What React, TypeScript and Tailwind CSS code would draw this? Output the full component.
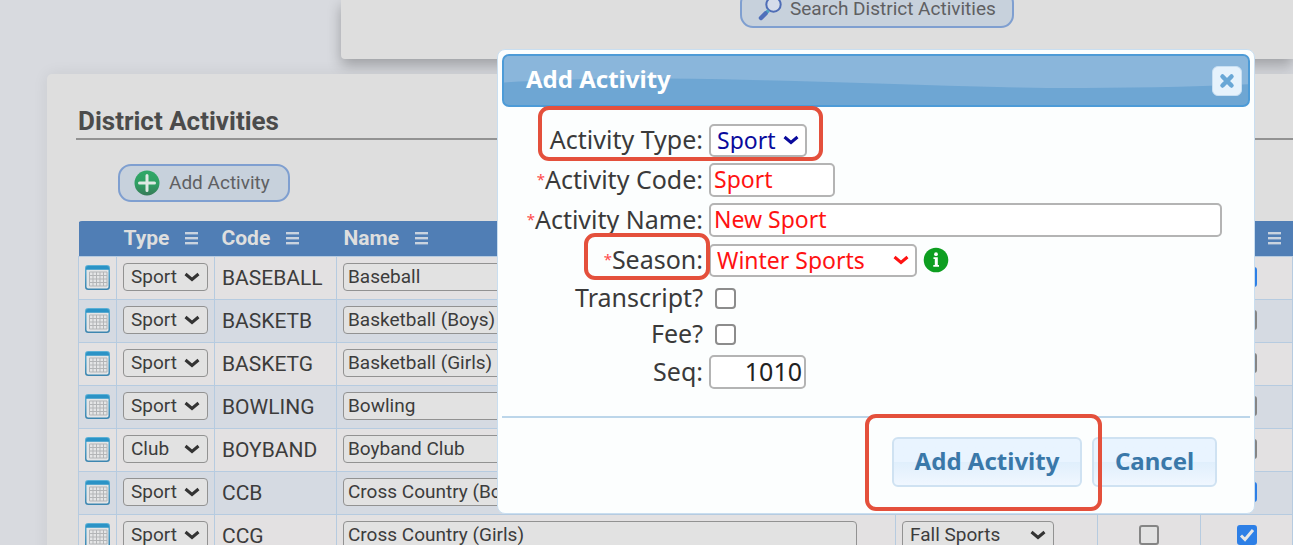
import React, { useId } from "react";

type Activity = {
  type: string;
  code: string;
  name: string;
  season: string;
  active: boolean;
};

const activities: Activity[] = [
  { type: "Sport", code: "BASEBALL", name: "Baseball", season: "Spring Sports", active: true },
  { type: "Sport", code: "BASKETB", name: "Basketball (Boys)", season: "Winter Sports", active: false },
  { type: "Sport", code: "BASKETG", name: "Basketball (Girls)", season: "Winter Sports", active: false },
  { type: "Sport", code: "BOWLING", name: "Bowling", season: "Winter Sports", active: false },
  { type: "Club", code: "BOYBAND", name: "Boyband Club", season: "Fall Sports", active: false },
  { type: "Sport", code: "CCB", name: "Cross Country (Boys)", season: "Fall Sports", active: true },
  { type: "Sport", code: "CCG", name: "Cross Country (Girls)", season: "Fall Sports", active: true },
];

function Chevron({ className }: { className: string }) {
  return (
    <svg viewBox="0 0 16 10" className={className} fill="none" stroke="currentColor" strokeWidth="3" aria-hidden="true">
      <path d="M1.5 2 L8 7.5 L14.5 2" />
    </svg>
  );
}

function MenuIcon() {
  return (
    <svg viewBox="0 0 13 13" className="h-[13px] w-[13px] shrink-0" fill="#c9d3df" aria-hidden="true">
      <rect x="0" y="0" width="13" height="2.4" />
      <rect x="0" y="5" width="13" height="2.4" />
      <rect x="0" y="10" width="13" height="2.4" />
    </svg>
  );
}

function CalendarIcon() {
  return (
    <svg viewBox="0 0 25 25" className="h-[25px] w-[25px]" aria-hidden="true">
      <defs>
        <linearGradient id="calFrame" x1="0" y1="0" x2="0" y2="1">
          <stop offset="0" stopColor="#5bb0d6" />
          <stop offset="1" stopColor="#3d86b0" />
        </linearGradient>
      </defs>
      <rect x="0.75" y="0.75" width="23.5" height="23.5" rx="2.5" fill="#e4e5e6" stroke="url(#calFrame)" strokeWidth="1.5" />
      <path d="M1 4.8 V3 Q1 1 3 1 H22 Q24 1 24 3 V4.8 Z" fill="#2b93c6" />
      <path d="M4.5 7 H22 V21 H4.5 Z M4.5 10.5 H22 M4.5 14 H22 M4.5 17.5 H22 M8 7 V21 M11.5 7 V21 M15 7 V21 M18.5 7 V21" fill="none" stroke="#b3b5b7" strokeWidth="1" />
    </svg>
  );
}

function PlusIcon() {
  return (
    <svg viewBox="0 0 26 26" className="h-[26px] w-[26px]" aria-hidden="true">
      <defs>
        <linearGradient id="plusFill" x1="0" y1="0" x2="0" y2="1">
          <stop offset="0" stopColor="#30a868" />
          <stop offset="0.55" stopColor="#2f9e63" />
          <stop offset="1" stopColor="#377a58" />
        </linearGradient>
      </defs>
      <circle cx="13" cy="13" r="12.5" fill="url(#plusFill)" />
      <path d="M13 5.5 V20.5 M5.5 13 H20.5" stroke="#dfe9e4" strokeWidth="3" strokeLinecap="round" />
    </svg>
  );
}

function SearchIcon() {
  return (
    <svg viewBox="0 0 26 26" className="h-[26px] w-[26px]" aria-hidden="true">
      <circle cx="16.5" cy="8.5" r="7.2" fill="#d5dcea" stroke="#4f6db6" strokeWidth="2" />
      <path d="M11.5 14.5 L9 17" stroke="#4fa6c4" strokeWidth="3.5" />
      <path d="M8.5 17.5 L4 22" stroke="#4f70ba" strokeWidth="4.5" strokeLinecap="round" />
    </svg>
  );
}

function InfoIcon() {
  return (
    <svg viewBox="0 0 26 26" className="h-[26px] w-[26px]" aria-hidden="true">
      <circle cx="13" cy="13" r="12.3" fill="#0d9e20" />
      <circle cx="13" cy="7.2" r="1.9" fill="#fff" />
      <path d="M10.5 10.3 H14.8 V18 H16 V19.8 H10.3 V18 H11.8 V12 H10.5 Z" fill="#fff" />
    </svg>
  );
}

function TableSelect({ value, label }: { value: string; label: string }) {
  return (
    <span className="relative flex">
      <select aria-label={label} defaultValue={value} className="h-7 w-full appearance-none rounded-[4px] border border-[#929292] bg-[#e2e2e2] pb-px pl-[7px] text-[19px] leading-6 text-[#3c3c3c]">
        <option>{value}</option>
      </select>
      <Chevron className="pointer-events-none absolute right-2 top-[9px] h-[10px] w-4 text-[#333]" />
    </span>
  );
}

function TableCheckbox({ checked, label }: { checked: boolean; label: string }) {
  return (
    <span className="relative mx-auto flex h-5 w-5">
      <input
        type="checkbox"
        aria-label={label}
        defaultChecked={checked}
        className="peer h-5 w-5 appearance-none rounded-[3px] border-2 border-[#858585] bg-[#e2e2e2] checked:border-[#2d7fe6] checked:bg-[#2d7fe6]"
      />
      <svg viewBox="0 0 20 20" className="pointer-events-none absolute inset-0 hidden peer-checked:block" fill="none" stroke="#e6e6e6" strokeWidth="3" aria-hidden="true">
        <path d="M4 10.5 L8 14.5 L16 5" />
      </svg>
    </span>
  );
}

function ActivityTable() {
  const cell = "border border-[#b6cbe0] px-[6px] pb-px pt-0";
  return (
    <div className="overflow-hidden rounded-tl-[4px]">
      <table className="w-full table-fixed border-collapse">
        <colgroup>
          <col className="w-[38px]" />
          <col className="w-[98px]" />
          <col className="w-[122px]" />
          <col />
          <col className="w-[202px]" />
          <col className="w-[103px]" />
          <col className="w-[92px]" />
        </colgroup>
        <thead>
          <tr className="h-[35px] bg-[#507eb5] text-left text-[21px] font-bold leading-6 text-[#dedede]">
            <th />
            {["Type", "Code", "Name"].map((title) => (
              <th key={title} className="px-[7px] py-0">
                <span className="flex items-center gap-4">
                  {title}
                  <MenuIcon />
                </span>
              </th>
            ))}
            <th />
            <th />
            <th>
              <span className="flex justify-end pr-3">
                <MenuIcon />
              </span>
            </th>
          </tr>
        </thead>
        <tbody>
          {activities.map((a) => (
            <tr key={a.code} className="h-[43px] odd:bg-[#e3e1e2] even:bg-[#d5dae2]">
              <td className={cell}>
                <button type="button" aria-label={`Schedule ${a.code}`} className="block">
                  <CalendarIcon />
                </button>
              </td>
              <td className={cell}>
                <TableSelect value={a.type} label={`Type of ${a.code}`} />
              </td>
              <td className="border border-[#b6cbe0] px-[7px] py-0 text-[21px] leading-6 text-[#3c3c3c]">{a.code}</td>
              <td className={cell}>
                <input
                  aria-label={`Name of ${a.code}`}
                  defaultValue={a.name}
                  className="block h-7 w-[calc(100%-32px)] rounded-[4px] border border-[#929292] bg-[#e2e2e2] px-1 pb-px text-[19px] leading-6 text-[#3c3c3c]"
                />
              </td>
              <td className={cell}>
                <div className="w-[152px]">
                  <TableSelect value={a.season} label={`Season of ${a.code}`} />
                </div>
              </td>
              <td className={cell}>
                <TableCheckbox checked={false} label={`Fee for ${a.code}`} />
              </td>
              <td className={cell}>
                <TableCheckbox checked={a.active} label={`Active ${a.code}`} />
              </td>
            </tr>
          ))}
        </tbody>
      </table>
    </div>
  );
}

function Field({ id, label, required, compact, children }: { id: string; label: string; required?: boolean; compact?: boolean; children: React.ReactNode }) {
  return (
    <div className={compact ? "flex h-9 items-center gap-[6px]" : "flex h-10 items-center gap-[6px]"}>
      <label htmlFor={id} className="flex w-[201px] shrink-0 items-center justify-end whitespace-nowrap pb-[3px] text-[25px] leading-8 text-[#3a3a3a]">
        {required && <span className="text-[15px] text-[#ff4b4b]">*</span>}
        {label}
      </label>
      {children}
    </div>
  );
}

function AddActivityDialog() {
  const id = useId();
  const box = "rounded-[5px] border-2 border-[#b4b4b4] bg-white pb-[2px]";
  const footerButton =
    "h-[50px] rounded-[6px] border-2 border-[#cfe2f2] bg-linear-to-b from-[#e9f4ff] from-50% via-[#e0effc] via-50% to-[#f0f7ff] pb-[3px] text-[24px] font-bold leading-8 text-[#3a78a9]";
  return (
    <div role="dialog" aria-labelledby={`${id}-title`} className="fixed right-[38px] top-[49px] w-[758px] rounded-[8px] border border-[#c9def0] bg-[#fcfefe] p-1 font-['Noto_Sans',sans-serif]">
      <header className="relative flex h-[53px] items-center justify-between overflow-hidden rounded-[7px] border-2 border-[#4d9bd7] bg-[#6ea6d3] pl-[22px] pr-[6px]">
        <svg viewBox="0 0 748 52" preserveAspectRatio="none" className="absolute inset-0 h-full w-full" aria-hidden="true">
          <path d="M0 0 H748 V30 C690 33 620 34 560 34 C440 33 300 24 128 24 C80 24 40 26 0 28 Z" fill="#8ab6db" />
        </svg>
        <h2 id={`${id}-title`} className="relative pb-[3px] text-[24px] font-bold leading-8 text-white">Add Activity</h2>
        <button type="button" aria-label="Close" className="relative flex h-[30px] w-[30px] items-center justify-center rounded-[6px] border border-[#c8dff2] bg-[#e6f2fc]">
          <svg viewBox="0 0 16 16" className="h-4 w-4" stroke="#69a7d6" strokeWidth="4.5" strokeLinecap="round" aria-hidden="true">
            <path d="M3.5 3.5 L12.5 12.5 M12.5 3.5 L3.5 12.5" />
          </svg>
        </button>
      </header>

      <form onSubmit={(e) => e.preventDefault()}>
        <div className="pb-6 pr-[28px] pt-[13px]">
          <Field id={`${id}-type`} label="Activity Type:">
            <span className="relative flex w-[98px]">
              <select id={`${id}-type`} defaultValue="Sport" className={`${box} h-[33px] w-full appearance-none pl-[6px] text-[23px] leading-7 text-[#0a0a9c]`}>
                <option>Sport</option>
                <option>Club</option>
              </select>
              <Chevron className="pointer-events-none absolute right-2 top-[11px] h-[10px] w-4 text-[#0a0a9c]" />
            </span>
          </Field>
          <Field id={`${id}-code`} label="Activity Code:" required>
            <input id={`${id}-code`} defaultValue="Sport" className={`${box} h-[34px] w-[126px] px-[3px] text-[23px] leading-7 text-[#ff1212]`} />
          </Field>
          <Field id={`${id}-name`} label="Activity Name:" required>
            <input id={`${id}-name`} defaultValue="New Sport" className={`${box} h-[34px] min-w-0 flex-1 px-[3px] text-[23px] leading-7 text-[#ff1212]`} />
          </Field>
          <Field id={`${id}-season`} label="Season:" required>
            <span className="relative flex w-[208px]">
              <select id={`${id}-season`} defaultValue="Winter Sports" className={`${box} h-[33px] w-full appearance-none pl-[6px] text-[23px] leading-7 text-[#ff1212]`}>
                <option>Fall Sports</option>
                <option>Winter Sports</option>
                <option>Spring Sports</option>
              </select>
              <Chevron className="pointer-events-none absolute right-2 top-[11px] h-[10px] w-4 text-[#ff1212]" />
            </span>
            <InfoIcon />
          </Field>
          <Field id={`${id}-transcript`} label="Transcript?" compact>
            <input id={`${id}-transcript`} type="checkbox" className="ml-[6px] h-[21px] w-[21px] appearance-none rounded-[4px] border-2 border-[#8c8c8c] bg-white" />
          </Field>
          <Field id={`${id}-fee`} label="Fee?" compact>
            <input id={`${id}-fee`} type="checkbox" className="ml-[6px] h-[21px] w-[21px] appearance-none rounded-[4px] border-2 border-[#8c8c8c] bg-white" />
          </Field>
          <Field id={`${id}-seq`} label="Seq:">
            <input id={`${id}-seq`} defaultValue="1010" className={`${box} h-[34px] w-[97px] px-[2px] text-right text-[25px] leading-7 text-[#222]`} />
          </Field>
        </div>
        <footer className="flex justify-end gap-[10px] border-t-2 border-[#bcd6ea] pb-[22px] pr-[33px] pt-[19px]">
          <button type="submit" className={`${footerButton} w-[190px]`}>
            Add Activity
          </button>
          <button type="button" className={`${footerButton} w-[125px]`}>
            Cancel
          </button>
        </footer>
      </form>

      <div className="pointer-events-none absolute left-[40px] top-[56px] h-[55px] w-[285px] rounded-[11px] border-4 border-[#e4503c]" />
      <div className="pointer-events-none absolute left-[86px] top-[183px] h-[47px] w-[126px] rounded-[11px] border-4 border-[#e4503c]" />
      <div className="pointer-events-none absolute left-[367px] top-[364px] h-[97px] w-[237px] rounded-[11px] border-4 border-[#e4503c]" />
    </div>
  );
}

export default function App() {
  const action = "flex h-[38px] items-center rounded-[13px] border-2 border-[#7f9fd0] bg-[#c7d1dc] text-[19px] leading-6 text-[#5f6062]";
  return (
    <div className="h-screen overflow-hidden bg-[#d8dadf] font-[Roboto,sans-serif]">
      <section className="ml-[341px] flex h-[59px] items-end rounded-bl-[4px] bg-[#dedede] pb-[31px] pl-[399px] shadow-[0_6px_14px_rgba(0,0,0,0.28)]">
        <button type="button" className={`${action} gap-[7px] whitespace-nowrap pl-[15px] pr-4`}>
          <SearchIcon />
          Search District Activities
        </button>
      </section>

      <main className="relative ml-[47px] mt-[15px] min-h-screen rounded-tl-[5px] bg-[#dedede] pl-[29px] pt-[31px] shadow-[0_0_16px_rgba(0,0,0,0.07)]">
        <h1 className="border-b-2 border-[#929292] pb-px pl-[2px] text-[26px] font-bold leading-8 text-[#4b4b4b]">District Activities</h1>
        <button type="button" className={`${action} ml-[42px] mt-6 gap-[9px] whitespace-nowrap pl-[14px] pr-[18px]`}>
          <PlusIcon />
          Add Activity
        </button>
        <div className="mt-[19px] pl-[2px]">
          <ActivityTable />
        </div>
      </main>

      <AddActivityDialog />
    </div>
  );
}
